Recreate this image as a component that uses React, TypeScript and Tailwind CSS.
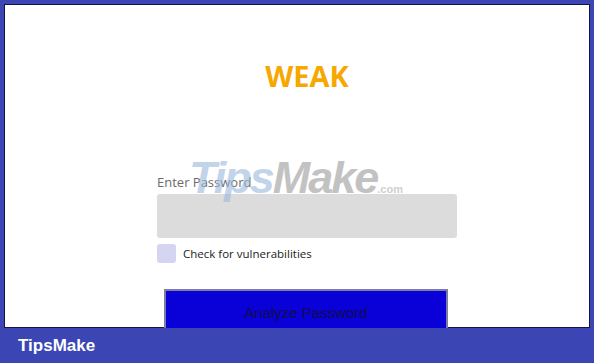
import { useState } from "react";

const App = () => {
  const [password, setPassword] = useState("");
  const [checked, setChecked] = useState(false);

  return (
    <div className="relative flex h-[363px] w-full flex-col overflow-hidden bg-[#3b46b4]">
      <div className="flex-1 overflow-hidden px-[4px] pt-[4px]">
        <div className="h-full border border-[#15154a] bg-white">
          <div className="ml-[152px] flex w-[300px] flex-col">
            <div
              className="mt-[51px] text-center text-[29px] font-bold leading-[40px] text-[#f6a800]"
              style={{ fontFamily: '"Open Sans", sans-serif' }}
            >
              WEAK
            </div>

            <label
              className="mt-[77px] block text-[13px] leading-[18px] text-[#6b6b6b]"
              style={{ fontFamily: '"Open Sans", sans-serif' }}
            >
              Enter Password
            </label>
            <input
              type="password"
              className="mt-[3px] h-[44px] w-full rounded-[3px] bg-[#dcdcdc] px-3 text-sm outline-none"
              value={password}
              onChange={(e) => setPassword(e.target.value)}
            />

            <label
              className="mt-[6px] flex items-center gap-[7px] text-[11.5px] leading-[19px] text-[#222]"
              style={{ fontFamily: '"Open Sans", sans-serif' }}
            >
              <span
                onClick={() => setChecked(!checked)}
                className="block h-[19px] w-[19px] rounded-[3px] bg-[#d5d5f2]"
              />
              Check for vulnerabilities
            </label>

            <button
              className="ml-[7px] mt-[26px] h-[50px] w-[284px] border-2 border-[#7c7ca6] bg-[#0a00d8] pb-[2px] text-[15px] text-[#0e0e50]"
              style={{ fontFamily: '"Liberation Sans", Arial, sans-serif' }}
            >
              Analyze Password
            </button>
          </div>
        </div>
      </div>

      <div className="flex h-[35px] items-center px-[18px]">
        <span
          className="text-[17px] font-bold text-white"
          style={{ fontFamily: '"Liberation Sans", Arial, sans-serif' }}
        >
          TipsMake
        </span>
      </div>

      {/* watermark */}
      <div
        className="pointer-events-none absolute left-[189px] top-[152px] flex items-baseline opacity-60"
        style={{ fontFamily: '"Liberation Sans", Arial, sans-serif' }}
      >
        <span className="text-[45px] font-bold italic leading-[52px] tracking-[-2px] text-[#9ab9dc]">Tips</span>
        <span className="text-[45px] font-bold italic leading-[52px] tracking-[-2px] text-[#9a9a9a]">Make</span>
        <span className="text-[11px] font-bold text-[#b0b0b0]">.com</span>
      </div>
    </div>
  );
};

export default App;
